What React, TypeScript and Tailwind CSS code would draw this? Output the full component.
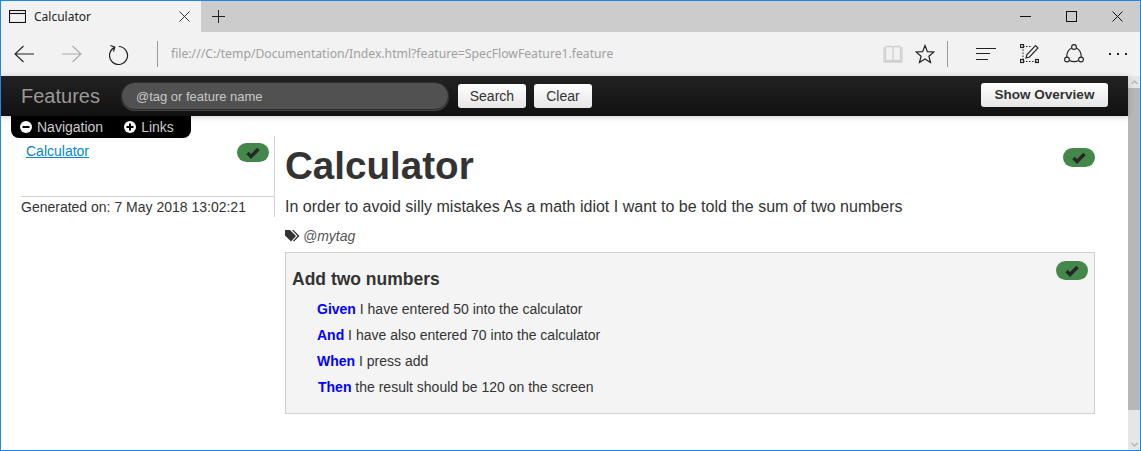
import React from "react";

const sans = "font-['Liberation_Sans',Arial,sans-serif]";
const chrome = "font-['Noto_Sans',sans-serif]";

function Badge({ className = "" }: { className?: string }) {
  return (
    <span className={`flex h-[19px] w-8 items-center justify-center rounded-[10px] bg-[#43884a] ${className}`}>
      <svg width="14" height="12" viewBox="0 0 14 12">
        <path d="M1.5 6 L5 9.5 L12.5 2" fill="none" stroke="#262626" strokeWidth="3.4" />
      </svg>
    </span>
  );
}

function Step({ kw, text }: { kw: string; text: string }) {
  return (
    <div className="h-[26px] text-[14px] leading-[26px] text-[#333]">
      <b className="text-[#0000ff]">{kw}</b> {text}
    </div>
  );
}

function Round({ kind }: { kind: "minus" | "plus" }) {
  return (
    <svg width="12" height="12" viewBox="0 0 12 12">
      <circle cx="6" cy="6" r="6" fill="#fff" />
      <path d={kind === "minus" ? "M2.5 6H9.5" : "M2.5 6H9.5M6 2.5V9.5"} stroke="#000" strokeWidth="2" />
    </svg>
  );
}

export default function App() {
  return (
    <div className={`flex h-[451px] w-[1141px] flex-col overflow-hidden border border-[#1e88e5] bg-white ${sans}`}>
      {/* Tab strip */}
      <div className={`flex h-[31px] shrink-0 items-stretch bg-[#cccccc] ${chrome}`}>
        <div className="flex w-[200px] items-center bg-[#f2f2f2] pl-2">
          <svg width="17" height="13" viewBox="0 0 17 13" fill="none" stroke="#111" strokeWidth="1.1">
            <rect x="0.5" y="0.5" width="16" height="12" />
            <path d="M0.5 3.5H16.5" />
          </svg>
          <span className="ml-[8px] text-[12px] text-[#222]">Calculator</span>
          <svg className="ml-auto mr-[11px]" width="11" height="11" viewBox="0 0 11 11" stroke="#333" strokeWidth="1">
            <path d="M0.5 0.5L10.5 10.5M10.5 0.5L0.5 10.5" />
          </svg>
        </div>
        <div className="flex w-[34px] items-center justify-center">
          <svg width="13" height="13" viewBox="0 0 13 13" stroke="#222" strokeWidth="1">
            <path d="M6.5 0V13M0 6.5H13" />
          </svg>
        </div>
        <div className="ml-auto flex items-center">
          <div className="flex w-[46px] justify-center">
            <svg width="11" height="11" viewBox="0 0 11 11" stroke="#111"><path d="M0 5.5H11" /></svg>
          </div>
          <div className="flex w-[46px] justify-center">
            <svg width="11" height="11" viewBox="0 0 11 11" fill="none" stroke="#111"><rect x="0.5" y="0.5" width="10" height="10" /></svg>
          </div>
          <div className="flex w-[46px] justify-center">
            <svg width="11" height="11" viewBox="0 0 11 11" stroke="#111"><path d="M0.5 0.5L10.5 10.5M10.5 0.5L0.5 10.5" /></svg>
          </div>
        </div>
      </div>

      {/* Toolbar */}
      <div className={`flex h-[44px] shrink-0 items-center bg-[#f2f2f2] ${chrome}`}>
        <svg className="ml-[13px]" width="20" height="18" viewBox="0 0 20 18" fill="none" stroke="#222" strokeWidth="1.1">
          <path d="M20 9H1M9.5 1L1 9L9.5 17" />
        </svg>
        <svg className="ml-[28px]" width="20" height="18" viewBox="0 0 20 18" fill="none" stroke="#aaa" strokeWidth="1.1">
          <path d="M0 9H19M10.5 1L19 9L10.5 17" />
        </svg>
        <svg className="ml-[27px]" width="20" height="21" viewBox="0 0 20 21" fill="none" stroke="#222" strokeWidth="1.2">
          <path d="M5.2 3.6A9 9 0 1 0 9.8 2.5M1.5 1.5L5.8 3.2L4.5 7.5" />
        </svg>
        <div className="ml-[28px] h-[26px] w-px bg-[#999]" />
        <span className="ml-[13px] text-[12.2px] text-[#a0a0a0]">file:///C:/temp/Documentation/Index.html?feature=SpecFlowFeature1.feature</span>
        <div className="ml-auto flex items-center">
          <svg width="20" height="18" viewBox="0 0 20 18" fill="none" stroke="#d0d0d0" strokeWidth="1.3">
            <path d="M1 3H2.5V15.5H9C9.5 15.5 10 16 10 16.5C10 16 10.5 15.5 11 15.5H17.5V3H19V17H1ZM2.5 1.5H8C9 1.5 10 2.5 10 3.5V16M17.5 1.5H12C11 1.5 10 2.5 10 3.5" />
          </svg>
          <svg className="ml-[12px]" width="20" height="20" viewBox="0 0 20 20" fill="none" stroke="#222" strokeWidth="1.2">
            <path d="M10 1.5L12.4 7.6L18.9 8L13.9 12.2L15.5 18.5L10 15L4.5 18.5L6.1 12.2L1.1 8L7.6 7.6Z" />
          </svg>
          <div className="ml-[12px] h-[26px] w-px bg-[#999]" />
          <svg className="ml-[28px]" width="20" height="14" viewBox="0 0 20 14" stroke="#222" strokeWidth="1">
            <path d="M0 1.5H20M0 6.5H14M0 12.5H12" />
          </svg>
          <svg className="ml-[24px]" width="19" height="20" viewBox="0 0 19 20" fill="none" stroke="#222">
            <path d="M3 2.5V17.5H17M3 2.5H12" strokeDasharray="1.5 1.5" />
            <rect x="0.5" y="0.5" width="3" height="3" strokeWidth="1.2" />
            <rect x="0.5" y="15.5" width="3" height="3" strokeWidth="1.2" />
            <rect x="15.5" y="15.5" width="3" height="3" strokeWidth="1.2" />
            <path d="M6 14L7 10.5L15.5 1.5L18 4L9.5 13Z" strokeWidth="1.1" />
          </svg>
          <svg className="ml-[25px]" width="20" height="20" viewBox="0 0 20 20" fill="none" stroke="#222" strokeWidth="1.1">
            <circle cx="10" cy="3" r="2.4" />
            <circle cx="3" cy="15.5" r="2.4" />
            <circle cx="17" cy="15.5" r="2.4" />
            <path d="M7.8 4C4.5 5.5 2.7 9 2.7 13M12.2 4C15.5 5.5 17.3 9 17.3 13M5.4 16.5C8 17.8 12 17.8 14.6 16.5" />
          </svg>
          <div className="ml-[25px] mr-[13px] flex gap-[6px]">
            <span className="h-[2px] w-[2px] bg-[#222]" />
            <span className="h-[2px] w-[2px] bg-[#222]" />
            <span className="h-[2px] w-[2px] bg-[#222]" />
          </div>
        </div>
      </div>

      {/* Page + scrollbar */}
      <div className="flex min-h-0 flex-1">
        <div className="relative min-w-0 flex-1">
          {/* Header */}
          <div className="flex h-[40px] items-center bg-gradient-to-b from-[#222222] to-[#111111] pl-[20px] pr-[20px] shadow-[0_1px_6px_rgba(0,0,0,0.2)]">
            <span className="text-[20px] text-[#999]">Features</span>
            <div className="ml-[21px] flex h-[28px] w-[328px] items-center rounded-[14px] border border-[#2c2c2c] bg-[#515151] pl-[14px] pt-[2px] text-[13px] text-[#c8c8c8] shadow-[0_1px_0_#444]">
              @tag or feature name
            </div>
            <button className="ml-[9px] h-[24px] w-[68px] rounded-[3px] bg-gradient-to-b from-white to-[#e6e6e6] text-[14px] text-[#333]">Search</button>
            <button className="ml-[8px] h-[24px] w-[58px] rounded-[3px] bg-gradient-to-b from-white to-[#e6e6e6] text-[14px] text-[#333]">Clear</button>
            <button className="ml-auto mb-[2px] mr-[0px] h-[24px] w-[127px] rounded-[3px] bg-gradient-to-b from-white to-[#e6e6e6] text-[13.5px] font-bold text-[#333]">Show Overview</button>
          </div>

          {/* Navigation tab lying over the content */}
          <div className="absolute left-[10px] top-[40px] z-10 flex h-[22px] w-[180px] items-center rounded-b-[8px] bg-black pl-[9px] text-[14px] text-[#ccc]">
            <Round kind="minus" />
            <span className="ml-[5px]">Navigation</span>
            <span className="ml-[21px] flex items-center">
              <Round kind="plus" />
              <span className="ml-[5px]">Links</span>
            </span>
          </div>

          <div className="flex pl-[20px]">
            {/* Sidebar */}
            <div className="mt-[20px] flex h-[81px] w-[254px] shrink-0 flex-col border-r border-[#d4d4d4]">
              <div className="flex h-[60px] items-start justify-between pr-[5px]">
                <a className="ml-[5px] mt-[6px] text-[14px] leading-[18px] text-[#0088cc] underline">Calculator</a>
                <Badge className="mt-[7px]" />
              </div>
              <div className="h-[21px] border-t border-[#d4d4d4] text-[14px] leading-[21px] text-[#333]">
                Generated on: 7 May 2018 13:02:21
              </div>
            </div>

            {/* Main */}
            <div className="ml-[10px] w-[810px]">
              <div className="mt-[25px] flex items-start justify-between">
                <h1 className="text-[38.6px] font-bold leading-[50px] text-[#333]">Calculator</h1>
                <Badge className="mt-[7px]" />
              </div>
              <p className="mt-[3px] text-[16.04px] leading-[24px] text-[#333]">
                In order to avoid silly mistakes As a math idiot I want to be told the sum of two numbers
              </p>
              <div className="mt-[8px] flex h-[20px] items-center text-[14px] italic text-[#555]">
                <svg width="15" height="12" viewBox="0 0 15 12" fill="#333">
                  <path d="M0 0H5L11 6L6 11.5L0 5.5Z" />
                  <path d="M7 0H8.5L14.5 6L9 11.5L8 10.7L12.5 6Z" />
                </svg>
                <span className="ml-[3px]">@mytag</span>
              </div>
              <div className="relative mt-[6px] h-[162px] border border-[#cfcfcf] bg-[#f4f4f4] pl-[6px]">
                <Badge className="absolute right-[6px] top-[8px]" />
                <h2 className="mt-[14px] text-[17.5px] font-bold leading-[24px] text-[#333]">Add two numbers</h2>
                <div className="ml-[25px] mt-[5px]">
                  <Step kw="Given" text="I have entered 50 into the calculator" />
                  <Step kw="And" text="I have also entered 70 into the calculator" />
                  <Step kw="When" text="I press add" />
                  <div className="pl-px"><Step kw="Then" text="the result should be 120 on the screen" /></div>
                </div>
              </div>
            </div>
          </div>
        </div>

        {/* Scrollbar */}
        <div className="flex w-[12px] shrink-0 flex-col bg-[#e6e6e6]">
          <div className="flex h-[12px] items-center justify-center">
            <svg width="7" height="5" viewBox="0 0 7 5" fill="none" stroke="#b5b5b5" strokeWidth="1.4"><path d="M0.5 4L3.5 1L6.5 4" /></svg>
          </div>
          <div className="h-[322px] bg-[#b7b7b7]" />
          <div className="mt-auto flex h-[12px] items-center justify-center">
            <svg width="7" height="5" viewBox="0 0 7 5" fill="none" stroke="#b5b5b5" strokeWidth="1.4"><path d="M0.5 1L3.5 4L6.5 1" /></svg>
          </div>
        </div>
      </div>
    </div>
  );
}
